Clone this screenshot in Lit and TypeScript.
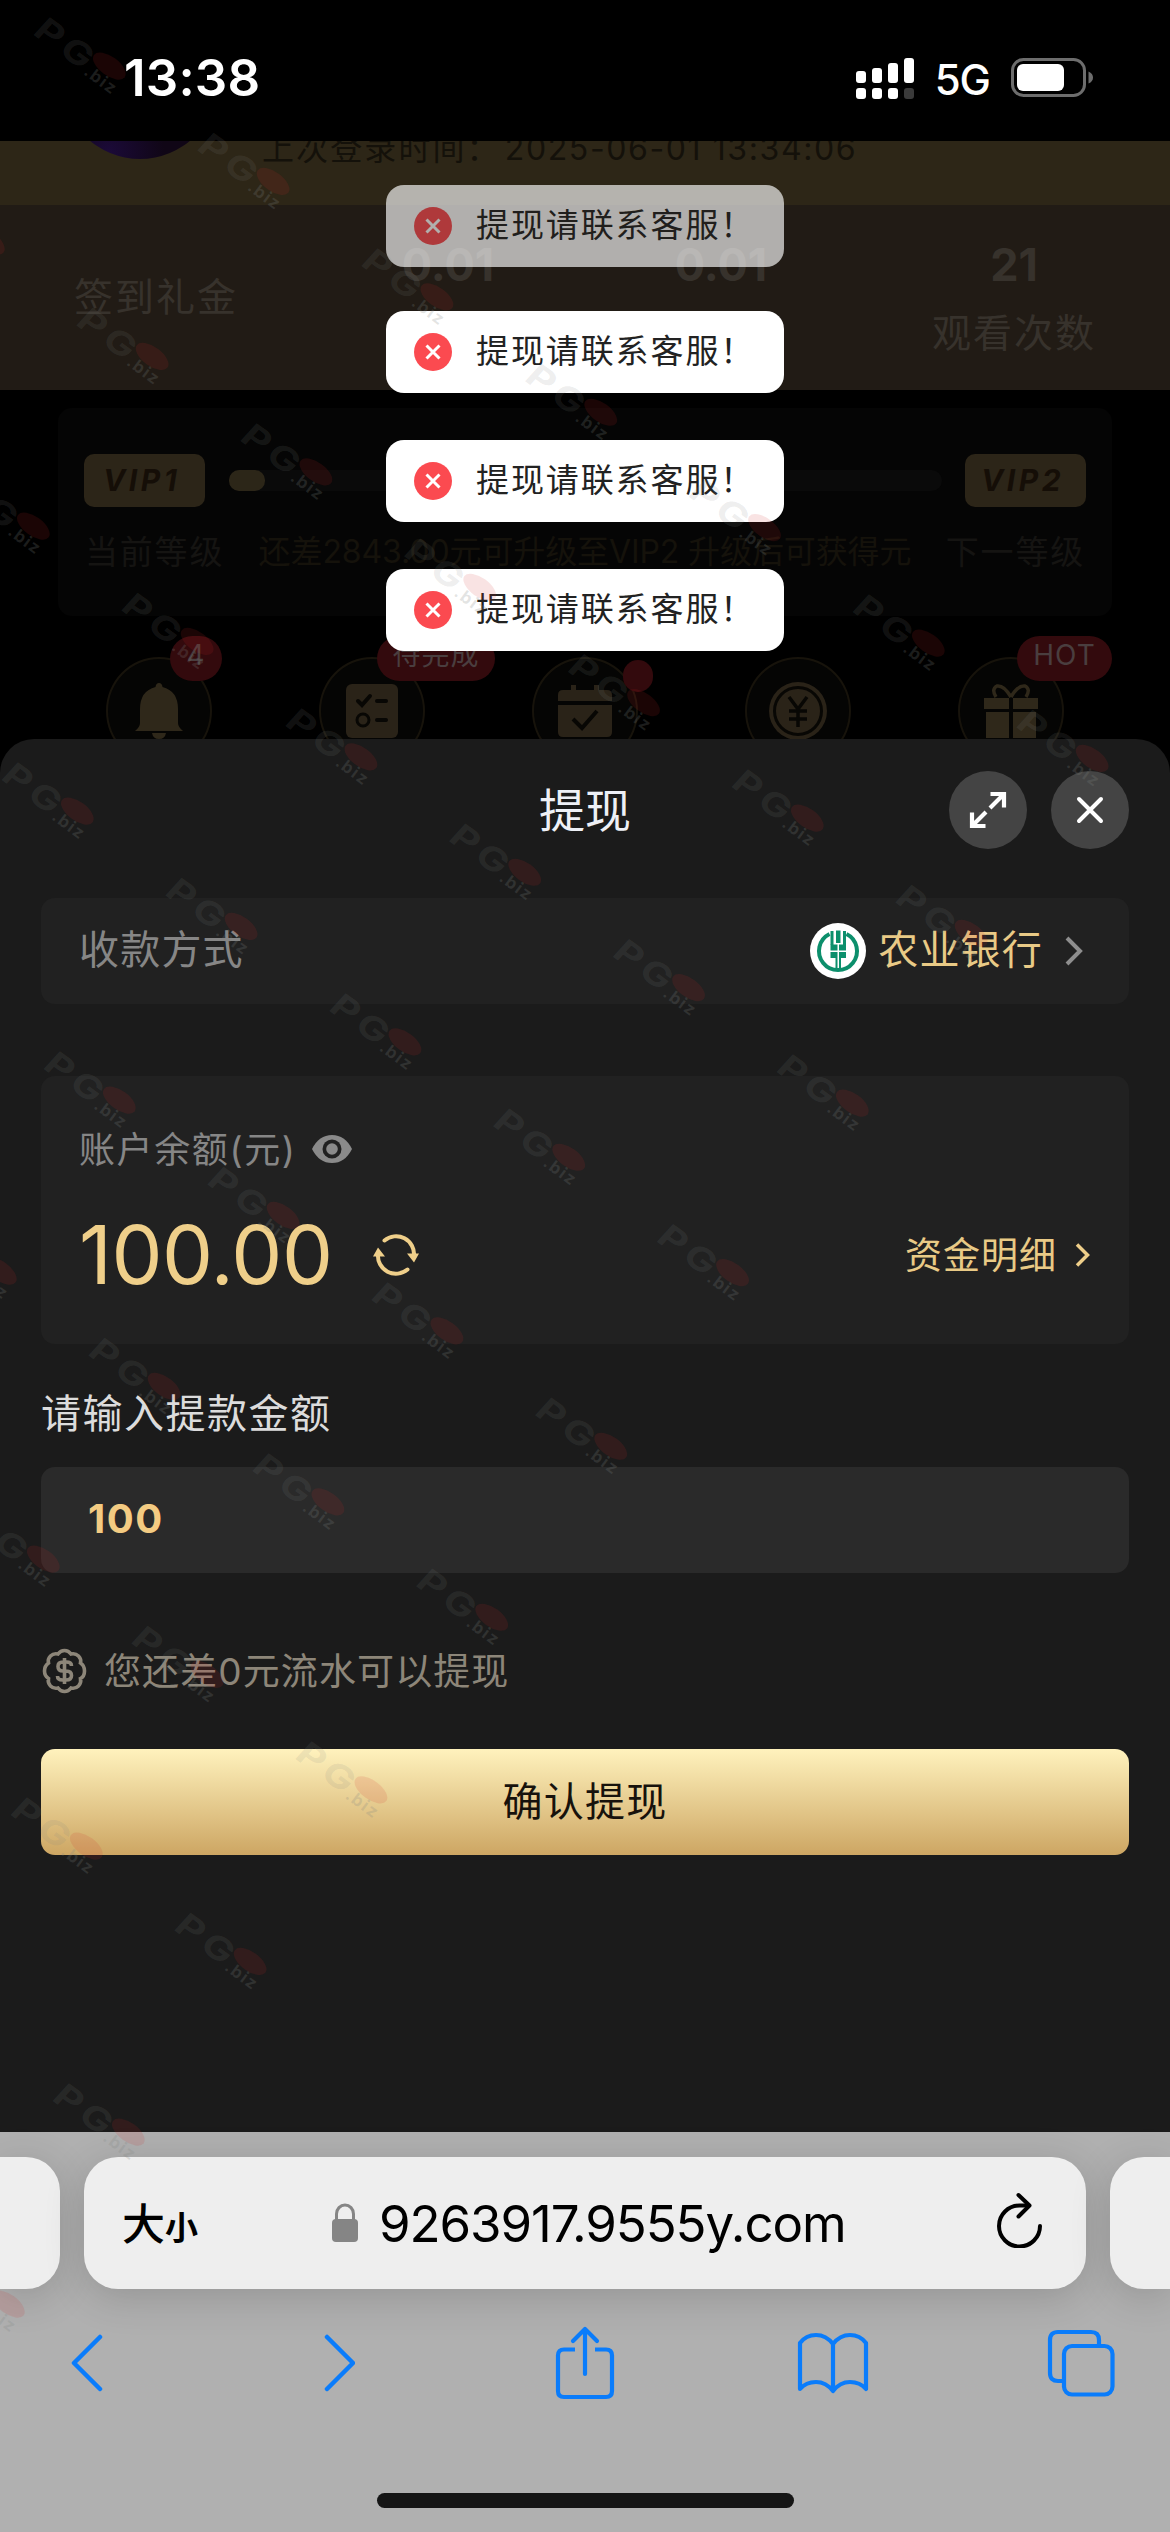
import { LitElement, html, css, svg } from "lit";
import { customElement } from "lit/decorators.js";

const TOASTS = [0, 1, 2, 3];

/* Each diagonal run of the watermark: start point and number of stamps. */
const STAMP_RUNS: Array<[number, number, number]> = [
  [34, 15, 7],
  [-87, 190, 7],
  [-42, 475, 6],
  [2, 760, 5],
  [44, 1049, 4],
  [-75, 1220, 4],
  [-32, 1508, 3],
  [11, 1795, 2],
  [53, 2081, 1],
  [-67, 2253, 1],
];
const STAMPS = STAMP_RUNS.flatMap(([x, y, n]) =>
  Array.from({ length: n }, (_, i) => [x + i * 163.8, y + i * 115.4])
);

@customElement("app-root")
export class AppRoot extends LitElement {
  static styles = css`
    :host {
      display: block;
      position: relative;
      width: 1170px;
      height: 2532px;
      overflow: hidden;
      background: #000;
      font-family: Inter, "Noto Sans CJK SC", sans-serif;
      font-weight: 400;
    }
    * {
      box-sizing: border-box;
    }
    svg {
      display: block;
      flex: none;
    }
    .column {
      display: flex;
      flex-direction: column;
      height: 2532px;
    }
    .status {
      height: 141px;
      flex: none;
      display: flex;
      justify-content: space-between;
      align-items: center;
      padding: 14px 76px 0 124px;
      color: #fff;
    }
    .clock {
      font-size: 51px;
      font-weight: 600;
      letter-spacing: 0.2px;
    }
    .status-right {
      display: flex;
      align-items: center;
    }
    .network {
      font-size: 42px;
      font-weight: 500;
      line-height: 44px;
      letter-spacing: -1px;
      margin: 4px 21px 0 20px;
    }

    .page {
      height: 598px;
      flex: none;
      overflow: hidden;
    }
    .profile {
      position: relative;
      height: 64px;
      overflow: hidden;
      background: #2d2617;
      padding-left: 262px;
      white-space: nowrap;
      color: #14110a;
      font-size: 32px;
      line-height: 44px;
      letter-spacing: 2.1px;
    }
    .last-login {
      margin-top: -14px;
    }
    .stamp-time {
      letter-spacing: 1.6px;
      margin-left: -7px;
    }
    .avatar {
      position: absolute;
      left: 62px;
      top: -138px;
      width: 156px;
      height: 156px;
      border-radius: 50%;
      background: radial-gradient(circle at 30% 95%, #1b0a38, #100616 30%);
    }
    .stats {
      height: 185px;
      background: #211b15;
      display: grid;
      grid-template-columns: 312px 272px 274px 312px;
      color: #37322c;
    }
    .stat {
      display: flex;
      flex-direction: column;
      align-items: center;
      font-size: 39px;
      letter-spacing: 2px;
      line-height: 56px;
    }
    .stat.single {
      padding-top: 64px;
    }
    .stat b {
      font-size: 45px;
      letter-spacing: 0;
      line-height: 56px;
      margin: 32px 0 12px;
    }
    .vip {
      margin: 18px 58px 0;
      height: 208px;
      background: #050505;
      border-radius: 14px;
      padding: 46px 26px 0;
    }
    .levels,
    .level-notes {
      display: flex;
      align-items: center;
      justify-content: space-between;
    }
    .badge {
      width: 121px;
      height: 53px;
      border-radius: 10px;
      background: #2c2518;
      color: #150e07;
      font: italic 700 30px/53px Inter, sans-serif;
      padding-right: 6px;
      text-align: center;
      letter-spacing: 3.5px;
    }
    .track {
      width: 713px;
      height: 21px;
      border-radius: 11px;
      background: #0a0a0a;
    }
    .fill {
      width: 36px;
      height: 21px;
      border-radius: 10px;
      background: #2c2618;
    }
    .level-notes {
      margin: 22px 0 0;
      padding: 0 1px;
      font-size: 33px;
      line-height: 46px;
      color: #151412;
      letter-spacing: 1.8px;
      white-space: nowrap;
    }
    .need {
      color: #15120b;
      font-size: 32px;
      letter-spacing: -0.1px;
    }
    .shortcuts {
      display: flex;
      gap: 107px;
      padding: 41px 0 0 106px;
    }
    .shortcut {
      position: relative;
      width: 106px;
      height: 108px;
      border-radius: 50%;
      border: 2px solid #17130b;
      background: #050504;
      display: flex;
      align-items: center;
      justify-content: center;
      flex: none;
    }
    .tag {
      position: absolute;
      top: -23px;
      height: 45px;
      border-radius: 23px;
      background: #330a0d;
      color: #4a3e3f;
      font-size: 28px;
      line-height: 39px;
      text-align: center;
      white-space: nowrap;
      letter-spacing: 1px;
    }
    .tag.count {
      left: 62px;
      width: 52px;
    }
    .tag.todo {
      left: 56px;
      width: 118px;
    }
    .tag.hot {
      left: 57px;
      width: 95px;
    }
    .tag.dot {
      left: 89px;
      top: 1px;
      width: 30px;
      height: 32px;
    }

    .sheet {
      flex: 1;
      border-radius: 34px 34px 0 0;
      background: #1b1b1b;
      padding: 0 41px;
    }
    .sheet-head {
      height: 159px;
      display: grid;
      grid-template-columns: 1fr auto 1fr;
      align-items: center;
      padding-bottom: 17px;
    }
    .title {
      grid-column: 2;
      font-size: 46px;
      line-height: 60px;
      color: #eef0f6;
    }
    .actions {
      display: flex;
      gap: 24px;
      justify-content: flex-end;
    }
    .round {
      width: 78px;
      height: 78px;
      border-radius: 50%;
      background: #444;
      display: flex;
      align-items: center;
      justify-content: center;
    }
    .method {
      height: 106px;
      border-radius: 14px;
      background: #212121;
      display: flex;
      align-items: center;
      padding: 0 46px 0 38px;
      font-size: 40px;
      letter-spacing: 1.2px;
    }
    .method span {
      margin-top: -8px;
    }
    .method-label {
      flex: 1;
      color: #868686;
    }
    .method .bank {
      color: #e9ca86;
      margin: -8px 22px 0 12px;
    }
    .balance {
      margin-top: 72px;
      height: 268px;
      border-radius: 14px;
      background: #212121;
      padding: 44px 38px 0 38px;
    }
    .balance-label {
      display: flex;
      align-items: center;
      height: 58px;
      color: #868686;
      font-size: 36px;
      letter-spacing: 1.6px;
      gap: 16px;
    }
    .balance-label span {
      margin-top: -4px;
    }
    .balance-row {
      display: flex;
      align-items: center;
      height: 90px;
      margin-top: 32px;
      color: #efcf8a;
    }
    .amount {
      font-size: 81px;
      line-height: 90px;
      letter-spacing: -0.5px;
      margin-right: 40px;
    }
    .detail {
      margin-left: auto;
      margin-right: 18px;
      margin-top: -5px;
      font-size: 37px;
      letter-spacing: 1px;
      color: #e9ca86;
    }
    .ask {
      margin-top: 41px;
      font-size: 40px;
      line-height: 58px;
      letter-spacing: 1.5px;
      color: #dcdcdc;
    }
    .field {
      margin-top: 24px;
      height: 106px;
      border-radius: 14px;
      background: #2a2a2a;
      padding: 0 46px 3px 47px;
      display: flex;
      align-items: center;
      color: #f3cb82;
      font-size: 40px;
      font-weight: 700;
      letter-spacing: 1.5px;
    }
    .hint {
      height: 56px;
      margin-top: 70px;
      display: flex;
      align-items: center;
      gap: 16px;
      color: #8d8679;
      font-size: 37px;
      letter-spacing: 1.1px;
    }
    .hint span {
      margin-top: -5px;
    }
    .confirm {
      height: 106px;
      margin-top: 50px;
      border-radius: 14px;
      background: linear-gradient(#fff2bd, #cda663);
      display: flex;
      align-items: center;
      justify-content: center;
      padding-bottom: 7px;
      color: #17120c;
      font-size: 40px;
      letter-spacing: 1.2px;
    }

    .browser {
      height: 400px;
      flex: none;
      background: #b0b0b0;
      padding-top: 25px;
      display: flex;
      flex-direction: column;
    }
    .tabs {
      display: flex;
      gap: 24px;
      height: 132px;
      flex: none;
    }
    .tab {
      background: #eee;
      border-radius: 34px;
      box-shadow: 0 8px 40px rgba(0, 0, 0, 0.16);
    }
    .tab.prev {
      width: 60px;
      border-radius: 0 34px 34px 0;
    }
    .tab.next {
      width: 60px;
      border-radius: 34px 0 0 34px;
    }
    .tab.current {
      width: 1002px;
      display: flex;
      align-items: center;
      padding: 0 43px 0 38px;
      color: #000;
    }
    .size {
      font-family: "Noto Sans CJK SC", sans-serif;
      font-weight: 500;
      font-size: 43px;
      line-height: 50px;
      width: 210px;
    }
    .size small {
      font-size: 33px;
      font-weight: 700;
    }
    .url {
      flex: 1;
      font-size: 51px;
      line-height: 60px;
      letter-spacing: -1.1px;
      margin: 2px 0 0 21px;
    }
    .reload {
      margin-top: -6px;
    }
    .tools {
      display: grid;
      grid-template-columns: repeat(5, 248px);
      justify-content: center;
      justify-items: center;
      align-items: center;
      margin-top: 34px;
      height: 80px;
    }
    .home {
      width: 417px;
      height: 15px;
      border-radius: 8px;
      background: #151515;
      margin: 90px auto 0;
    }

    .toasts {
      position: absolute;
      left: 386px;
      top: 185px;
      width: 398px;
      display: flex;
      flex-direction: column;
      gap: 47px;
    }
    .toast {
      height: 82px;
      border-radius: 18px;
      background: #fff;
      display: flex;
      align-items: center;
      gap: 24px;
      padding: 0 0 0 28px;
      color: #222;
      font-size: 33px;
      letter-spacing: 1.9px;
      white-space: nowrap;
    }
    .toast:first-child {
      opacity: 0.65;
      margin-bottom: -3px;
    }
    .toast span {
      margin-top: -7px;
    }
    .watermark {
      position: absolute;
      left: 0;
      top: 0;
      pointer-events: none;
    }
    .mark-text {
      font: 700 33px Inter, sans-serif;
      letter-spacing: 4px;
      fill: #808582;
      fill-opacity: 0.15;
    }
    .mark-sub {
      font: 700 17px Inter, sans-serif;
      letter-spacing: 1.5px;
      fill: #808582;
      fill-opacity: 0.22;
    }
    .mark-dot {
      fill: #d02a2a;
      fill-opacity: 0.13;
    }
  `;

  private statusBar() {
    return html`<div class="status">
      <span class="clock">13:38</span>
      <div class="status-right">
        <svg width="59" height="44" viewBox="0 0 59 44" fill="#fff">
          <rect x="0" y="15" width="10" height="12" rx="3" />
          <rect x="16" y="12" width="10" height="15" rx="3" />
          <rect x="32" y="7" width="10" height="20" rx="3" />
          <rect x="48" y="2" width="10" height="25" rx="3" />
          <rect x="0" y="32" width="10" height="11" rx="3" />
          <rect x="16" y="32" width="10" height="11" rx="3" />
          <rect x="32" y="32" width="10" height="11" rx="3" />
          <rect x="48" y="32" width="10" height="11" rx="3" fill="#3a3a3a" />
        </svg>
        <span class="network">5G</span>
        <svg width="83" height="40" viewBox="0 0 83 40">
          <rect x="1.5" y="1.5" width="72" height="36" rx="11" fill="none" stroke="#6d6d6d" stroke-width="3" />
          <rect x="6" y="6" width="47" height="27" rx="6" fill="#fff" />
          <path d="M77.500 13.500q4.500 2 4.500 6t-4.500 6z" fill="#6d6d6d" />
        </svg>
      </div>
    </div>`;
  }

  private page() {
    return html`<div class="page">
      <div class="profile">
        <div class="avatar"></div>
        <div class="last-login">上次登录时间： <span class="stamp-time">2025-06-01 13:34:06</span></div>
      </div>
      <div class="stats">
        <div class="stat single"><span>签到礼金</span></div>
        <div class="stat"><b>0.01</b></div>
        <div class="stat"><b>0.01</b></div>
        <div class="stat"><b>21</b><span>观看次数</span></div>
      </div>
      <div class="vip">
        <div class="levels">
          <div class="badge">VIP1</div>
          <div class="track"><div class="fill"></div></div>
          <div class="badge">VIP2</div>
        </div>
        <div class="level-notes">
          <span>当前等级</span>
          <span class="need">还差2843.00元可升级至VIP2 升级后可获得元</span>
          <span>下一等级</span>
        </div>
      </div>
      <div class="shortcuts">
        <div class="shortcut">
          <svg width="48" height="56" viewBox="0 0 48 56" fill="#2f281a">
            <path d="M24 0q3 0 3.500 4Q43 8 43 26v14q0 4 5 8H0q5-4 5-8V26Q5 8 20.500 4 21 0 24 0z" />
            <path d="M17 50h14q-1 6-7 6t-7-6z" />
          </svg>
          <span class="tag count">4</span>
        </div>
        <div class="shortcut">
          <svg width="52" height="54" viewBox="0 0 52 54">
            <rect width="52" height="54" rx="6" fill="#2a2318" />
            <g fill="none" stroke="#080704" stroke-width="4" stroke-linecap="round">
              <path d="M12 17l4 4 8-9M31 17h9M31 36h9" />
              <circle cx="17" cy="36" r="6" stroke-width="3" />
            </g>
          </svg>
          <span class="tag todo">待完成</span>
        </div>
        <div class="shortcut">
          <svg width="54" height="52" viewBox="0 0 54 52">
            <path d="M0 10q0-5 5-5h8V0h5v5h18V0h5v5h8q5 0 5 5v6H0zM0 20h54v27q0 5-5 5H5q-5 0-5-5z" fill="#2a2318" />
            <path d="M15 34l9 9 15-17" fill="none" stroke="#080704" stroke-width="4" />
          </svg>
          <span class="tag dot"></span>
        </div>
        <div class="shortcut">
          <svg width="58" height="58" viewBox="0 0 58 58">
            <circle cx="29" cy="29" r="29" fill="#2a2318" />
            <circle cx="29" cy="29" r="23.500" fill="none" stroke="#080704" stroke-width="3" />
            <path d="M20 15l9 12 9-12M29 27v18M20 29h18M20 37h18" fill="none" stroke="#080704" stroke-width="3.500" />
          </svg>
        </div>
        <div class="shortcut">
          <svg width="54" height="54" viewBox="0 0 54 54">
            <path d="M0 14h54v11H29V14h-4v11H0zM2 28h23v26H2zM29 28h23v26H29z" fill="#2f281a" />
            <path d="M27 13Q20 1 13 2q-6 3-1 11M27 13Q34 1 41 2q6 3 1 11" fill="none" stroke="#2f281a" stroke-width="3.500" />
          </svg>
          <span class="tag hot">HOT</span>
        </div>
      </div>
    </div>`;
  }

  private sheet() {
    return html`<div class="sheet">
      <div class="sheet-head">
        <div class="title">提现</div>
        <div class="actions">
          <div class="round">
            <svg width="40" height="40" viewBox="0 0 40 40" fill="none" stroke="#fff" stroke-width="4.200">
              <path d="M22 18L36 4M22.500 4H36V17.500M18 22L4 36M4 22.500V36h13.500" />
            </svg>
          </div>
          <div class="round">
            <svg width="28" height="28" viewBox="0 0 28 28" stroke="#fff" stroke-width="4" stroke-linecap="round">
              <path d="M3 3l22 22M25 3L3 25" />
            </svg>
          </div>
        </div>
      </div>
      <div class="method">
        <span class="method-label">收款方式</span>
        <svg width="56" height="56" viewBox="0 0 56 56">
          <circle cx="28" cy="28" r="28" fill="#fff" />
          <g fill="none" stroke="#0c8f6c">
            <path d="M19.500 11A19 19 0 1 0 36.500 11" stroke-width="4" />
            <path d="M22 8v14M34.500 8v14" stroke-width="3" />
          </g>
          <g fill="#0c8f6c">
            <rect x="26" y="7.500" width="4.500" height="12.500" />
            <rect x="20.500" y="21.500" width="7" height="6" />
            <rect x="29" y="21.500" width="7" height="6" />
            <path d="M20.500 29h7v19h-2V35h-5zM29 29h7v6h-5v13h-2z" />
          </g>
        </svg>
        <span class="bank">农业银行</span>
        <svg width="18" height="30" viewBox="0 0 18 30" fill="none" stroke="#8e8e8e" stroke-width="4">
          <path d="M2 2l13 13L2 28" />
        </svg>
      </div>
      <div class="balance">
        <div class="balance-label">
          <span>账户余额(元)</span>
          <svg width="40" height="28" viewBox="0 0 40 28">
            <path d="M0 14Q7 0 20 0t20 14Q33 28 20 28T0 14z" fill="#8a8a8a" />
            <circle cx="20" cy="14" r="9.500" fill="#212121" />
            <circle cx="20" cy="14" r="5.800" fill="#8a8a8a" />
          </svg>
        </div>
        <div class="balance-row">
          <span class="amount">100.00</span>
          <svg width="46" height="42" viewBox="0 0 46 42" fill="none" stroke="#efcf8a" stroke-width="4">
            <path d="M11.500 6.500A18 18 0 0 1 41 22M34.500 35.500A18 18 0 0 1 5 20" stroke-linecap="round" />
            <path d="M34 19.500h12l-5 9zM0 22.500h12l-7-9z" fill="#efcf8a" stroke="none" />
          </svg>
          <span class="detail">资金明细</span>
          <svg width="16" height="24" viewBox="0 0 16 24" fill="none" stroke="#efcf8a" stroke-width="3.500">
            <path d="M2 1.500L12.500 12 2 22.500" />
          </svg>
        </div>
      </div>
      <div class="ask">请输入提款金额</div>
      <div class="field">100</div>
      <div class="hint">
        <svg width="47" height="46" viewBox="0 0 46 46" fill="none" stroke="#8d8679" stroke-width="3.600">
          <path
            d="M23 2.500q4 0 6.500 3.500 4.500-1 7.500 2t2 7q4 2.500 4 8t-4 7.500q1 4.500-2 7.500t-7.500 2Q27 43.500 23 43.500T16.500 40Q12 41 9 38t-2-7.500Q3 28 3 23t4-8Q6 11 9 8t7.500-2Q19 2.500 23 2.500z"
          />
          <path d="M30 18q0-4-5-4h-3.500q-5 0-5 4.500t5 4.500h3q5.500 0 5.500 4.500T24.500 32H21q-5 0-5-4M23 10v26" stroke-width="3.600" />
        </svg>
        <span>您还差0元流水可以提现</span>
      </div>
      <div class="confirm">确认提现</div>
    </div>`;
  }

  private browser() {
    return html`<div class="browser">
      <div class="tabs">
        <div class="tab prev"></div>
        <div class="tab current">
          <span class="size">大<small>小</small></span>
          <svg width="26" height="40" viewBox="0 0 26 40">
            <rect y="16" width="26" height="23" rx="4" fill="#858585" />
            <path d="M4.500 18V11a8.500 9 0 0 1 17 0v7" fill="none" stroke="#858585" stroke-width="3" />
          </svg>
          <span class="url">9263917.9555y.com</span>
          <svg class="reload" width="46" height="56" viewBox="0 0 46 56" fill="none" stroke="#000" stroke-width="4" stroke-linecap="round">
            <path d="M43 34A20.500 20.500 0 1 1 22.500 13.500h9" />
            <path d="M21.500 3L32.500 13.500 21.500 24.500" stroke-linejoin="round" />
          </svg>
        </div>
        <div class="tab next"></div>
      </div>
      <div class="tools">
        <svg width="36" height="58" viewBox="0 0 36 58" fill="none" stroke="#0a7cfb" stroke-width="4.500" stroke-linecap="round" stroke-linejoin="round">
          <path d="M29 3L3 29l26 26" />
        </svg>
        <svg width="36" height="58" viewBox="0 0 36 58" fill="none" stroke="#0a7cfb" stroke-width="4.500" stroke-linecap="round" stroke-linejoin="round">
          <path d="M8 3l26 26L8 55" />
        </svg>
        <svg width="60" height="74" viewBox="0 0 60 74" fill="none" stroke="#0a7cfb" stroke-width="4.200" stroke-linecap="round" stroke-linejoin="round">
          <path d="M30 48V3M18 15L30 3l12 12" />
          <path d="M20 23.500H9q-6 0-6 6V65q0 6 6 6h42q6 0 6-6V29.500q0-6-6-6H40" stroke-linecap="butt" />
        </svg>
        <svg width="72" height="62" viewBox="0 0 72 62" fill="none" stroke="#0a7cfb" stroke-width="4.200" stroke-linejoin="round">
          <path d="M36 12Q29 3 19 3T3 11v46q6-7 16-7t17 9q7-9 17-9t16 7V11Q63 3 53 3T36 12zM36 12v47" />
        </svg>
        <svg width="68" height="68" viewBox="0 0 68 68" fill="none" stroke="#0a7cfb" stroke-width="4.200">
          <rect x="17" y="17" width="48.500" height="48.500" rx="8" />
          <path d="M17 52h-6q-8 0-8-8V11q0-8 8-8h33q8 0 8 8v6" />
        </svg>
      </div>
      <div class="home"></div>
    </div>`;
  }

  private watermark() {
    return svg`<svg class="watermark" width="1170" height="2532" viewBox="0 0 1170 2532">
      ${STAMPS.map(
        ([x, y]) => svg`<g transform="translate(${x - 1} ${y + 3}) rotate(36)">
          <text class="mark-text" transform="translate(8 13.500) skewX(-6) scale(1.250 1)">PG</text>
          <ellipse class="mark-dot" cx="90" cy="-6" rx="19" ry="9.500" />
          <text class="mark-sub" x="73" y="16">.biz</text>
        </g>`
      )}
    </svg>`;
  }

  render() {
    return html`
      <div class="column">
        ${this.statusBar()} ${this.page()} ${this.sheet()} ${this.browser()}
      </div>
      <div class="toasts">
        ${TOASTS.map(
          () => html`<div class="toast">
            <svg width="38" height="38" viewBox="0 0 38 38">
              <circle cx="19" cy="19" r="19" fill="#fb4a50" />
              <path d="M12.500 12.500l13 13M25.500 12.500l-13 13" stroke="#fff" stroke-width="3" />
            </svg>
            <span>提现请联系客服！</span>
          </div>`
        )}
      </div>
      ${this.watermark()}
    `;
  }
}
